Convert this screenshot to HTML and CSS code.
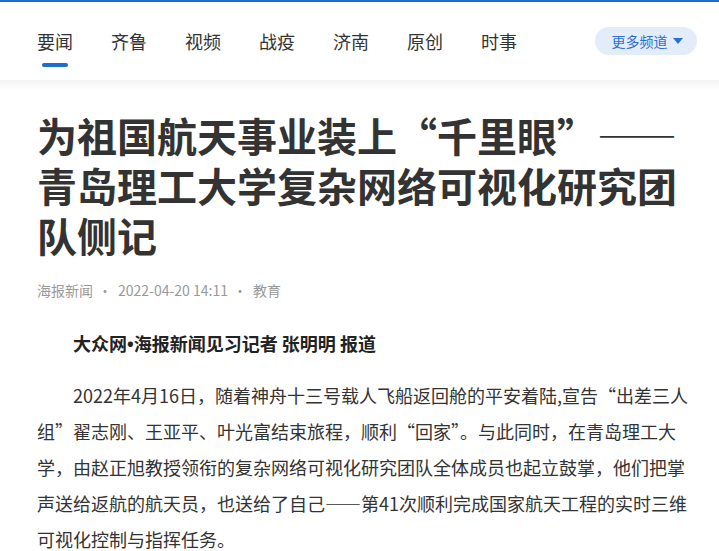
FILE: index.html
```html
<!DOCTYPE html>
<html lang="zh-CN">
<head>
<meta charset="utf-8">
<title>为祖国航天事业装上“千里眼”</title>
<link rel="stylesheet" href="styles.css">
</head>
<body>
<header class="topnav">
  <ul class="channels">
    <li class="channel active">要闻</li>
    <li class="channel">齐鲁</li>
    <li class="channel">视频</li>
    <li class="channel">战疫</li>
    <li class="channel">济南</li>
    <li class="channel">原创</li>
    <li class="channel">时事</li>
  </ul>
  <button class="more">更多频道<svg class="caret" width="10" height="6" viewBox="0 0 10 6"><path d="M0 0H10L5 6Z" fill="currentColor"/></svg></button>
</header>
<div class="nav-shade"></div>
<main class="article">
  <h1 class="title">为祖国航天事业装上“千里眼”——青岛理工大学复杂网络可视化研究团队侧记</h1>
  <div class="meta"><span>海报新闻</span><span class="dot">·</span><span class="date">2022-04-20 14:11</span><span class="dot">·</span><span>教育</span></div>
  <p class="byline">大众网<span class="bullet">•</span>海报新闻见习记者 张明明 报道</p>
  <p class="para">2022年4月16日，随着神舟十三号载人飞船返回舱的平安着陆,宣告“出差三人组”翟志刚、王亚平、叶光富结束旅程，顺利“回家”。与此同时，在青岛理工大学，由赵正旭教授领衔的复杂网络可视化研究团队全体成员也起立鼓掌，他们把掌声送给返航的航天员，也送给了自己——第41次顺利完成国家航天工程的实时三维可视化控制与指挥任务。</p>
</main>
</body>
</html>
```

FILE: styles.css
```css
* { box-sizing: border-box; }
html, body {
  margin: 0;
  padding: 0;
  background: #fff;
  font-family: "Noto Sans CJK SC", "Noto Sans", sans-serif;
  color: #333;
}
.topnav {
  height: 80px;
  border-top: 2px solid #1b6dd3;
  display: flex;
  align-items: center;
  justify-content: space-between;
  padding: 0 22px 0 37px;
}
.channels {
  list-style: none;
  margin: 0;
  padding: 0;
  display: flex;
  gap: 38px;
}
.channel {
  font-size: 18px;
  line-height: 24px;
  color: #333;
  position: relative;
}
.channel.active::after {
  content: "";
  position: absolute;
  left: 5px;
  top: calc(100% + 10px);
  width: 26px;
  height: 4px;
  border-radius: 2px;
  background: #1b6dd3;
}
.more {
  display: flex;
  align-items: center;
  gap: 5px;
  height: 28px;
  width: 102px;
  justify-content: center;
  padding: 0 0 0 2px;
  border: none;
  border-radius: 14px;
  background: #e3ecf9;
  color: #2b6fd5;
  font-family: inherit;
  font-size: 14px;
  line-height: 20px;
}
.caret { display: block; }
.nav-shade {
  height: 10px;
  background: linear-gradient(#f3f3f3, #fff);
}
.article {
  padding: 20px 28px 0 37px;
}
.title {
  margin: 0;
  font-size: 40px;
  line-height: 50px;
  font-weight: 700;
  color: #333;
}
.meta {
  margin-top: 20px;
  font-size: 14px;
  line-height: 20px;
  color: #999;
  display: flex;
}
.dot { margin: 0 6px 0 5px; }
.byline {
  margin: 31px 0 0;
  padding-left: 36px;
  font-size: 18px;
  line-height: 24px;
  font-weight: 700;
  color: #222;
}
.bullet {
  font-family: "Noto Sans", sans-serif;
}
.para {
  margin: 21px 0 0;
  font-size: 18px;
  line-height: 36px;
  text-indent: 36px;
  color: #333;
}
```
